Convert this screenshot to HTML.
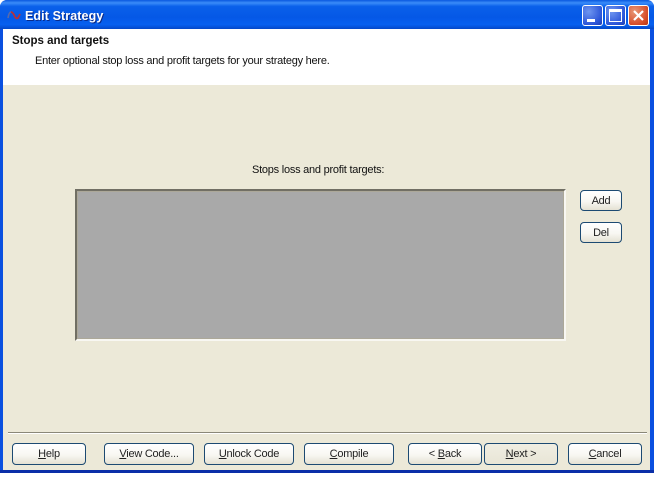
<!DOCTYPE html>
<html><head><meta charset="utf-8">
<style>
html,body{margin:0;padding:0;background:#fff}
body{width:654px;height:491px;position:relative;overflow:hidden;font-family:"Liberation Sans",sans-serif;font-size:11px;letter-spacing:-.24px;color:#111}
div{position:absolute;box-sizing:border-box}
.t{white-space:nowrap}
.btn{height:22px;top:443px;border:1px solid #1c4a72;border-radius:4px;background:linear-gradient(#fff 0%,#f8f7f2 55%,#e4e1d3 100%);text-align:center;line-height:21px;white-space:nowrap;color:#222}
.wb{top:5px;width:21px;height:21px;border:1px solid #fff;border-radius:3px;background:radial-gradient(circle at 30% 30%,#6f96f0,#2c55d8 70%,#1c3cb0)}
u{text-decoration:underline}
</style></head><body>
<div style="left:0;top:0;width:654px;height:473px;background:#0a4fe0;border-radius:7px 7px 0 0"></div>
<div style="left:0;top:0;width:654px;height:29px;border-radius:7px 7px 0 0;background:linear-gradient(#0a58e0 0%,#3a8cf8 10%,#0a60ea 22%,#0558e6 60%,#0760f0 85%,#0448c8 100%)"></div>
<div style="left:0;top:29px;width:3px;height:444px;background:#0a50e0"></div>
<div style="left:650px;top:29px;width:4px;height:444px;background:#0a50e0"></div>
<div style="left:0;top:470px;width:654px;height:3px;background:#0a2fa8"></div>
<svg style="position:absolute;left:6px;top:9px" width="16" height="13" viewBox="0 0 16 13"><path d="M2 9 Q3 3 5 3" fill="none" stroke="#5a6aa8" stroke-width="1.6"/><path d="M5 3 Q7 3 9 8 Q10 10 12 9 L14 5" fill="none" stroke="#b83038" stroke-width="1.8"/></svg>
<div class="t" style="left:25px;top:8px;color:#0a2a88;font-weight:bold;font-size:12.5px;letter-spacing:.1px;line-height:16px;transform:translate(1px,1px)">Edit Strategy</div>
<div class="t" style="left:25px;top:8px;color:#fff;font-weight:bold;font-size:12.5px;letter-spacing:.1px;line-height:16px">Edit Strategy</div>
<div class="wb" style="left:582px"><div style="left:4px;top:13px;width:8px;height:3px;background:#fff"></div></div>
<div class="wb" style="left:605px"><div style="left:3px;top:3px;width:13px;height:13px;border:1px solid #fff;border-top:3px solid #fff"></div></div>
<div class="wb" style="left:628px;background:radial-gradient(circle at 30% 30%,#e89878,#d8502c 65%,#b83410)"><svg style="position:absolute;left:3px;top:3px" width="13" height="13" viewBox="0 0 13 13"><path d="M2 2 L11 11 M11 2 L2 11" stroke="#fff" stroke-width="2.2" fill="none"/></svg></div>
<div style="left:3px;top:29px;width:647px;height:441px;background:#ece9d8"></div>
<div style="left:3px;top:29px;width:647px;height:56px;background:#fff"></div>
<div class="t" style="left:12px;top:34px;font-weight:bold;font-size:11.5px;letter-spacing:0;line-height:14px">Stops and targets</div>
<div class="t" style="left:35px;top:54px;line-height:14px">Enter optional stop loss and profit targets for your strategy here.</div>
<div class="t" style="left:252px;top:163px;line-height:14px">Stops loss and profit targets:</div>
<div style="left:75px;top:189px;width:491px;height:152px;background:#a9a9a9;border:2px solid;border-color:#716f64 #f8f7f2 #f8f7f2 #716f64;outline:1px solid #aca899;outline-offset:-3px"></div>
<div class="btn" style="left:580px;top:190px;width:42px;height:21px">Add</div>
<div class="btn" style="left:580px;top:222px;width:42px;height:21px">Del</div>
<div style="left:8px;top:432px;width:639px;height:1px;background:#8a8878"></div>
<div style="left:8px;top:433px;width:639px;height:1px;background:#fff"></div>
<div class="btn" style="left:12px;width:74px"><u>H</u>elp</div>
<div class="btn" style="left:104px;width:90px"><u>V</u>iew Code...</div>
<div class="btn" style="left:204px;width:90px"><u>U</u>nlock Code</div>
<div class="btn" style="left:304px;width:90px"><u>C</u>ompile</div>
<div class="btn" style="left:408px;width:74px">&lt; <u>B</u>ack</div>
<div class="btn" style="left:484px;width:74px;background:linear-gradient(#f0eee2,#e8e5d6)"><u>N</u>ext &gt;</div>
<div class="btn" style="left:568px;width:74px"><u>C</u>ancel</div>
</body></html>
